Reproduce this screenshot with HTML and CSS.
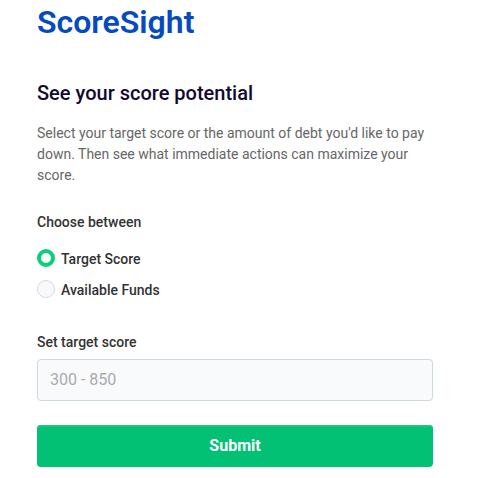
FILE: index.html
```html
<!DOCTYPE html>
<html lang="en">
<head>
<meta charset="utf-8">
<meta name="viewport" content="width=device-width, initial-scale=1">
<title>ScoreSight</title>
<link rel="stylesheet" href="styles.css">
</head>
<body>
<main class="page">
  <h1 class="brand">ScoreSight</h1>
  <h2 class="title">See your score potential</h2>
  <p class="intro">Select your target score or the amount of debt you'd like to pay down. Then see what immediate actions can maximize your score.</p>
  <form class="form">
    <fieldset class="choices">
      <legend class="label">Choose between</legend>
      <div class="options">
        <label class="option"><input class="radio" type="radio" name="mode" value="score" checked>Target Score</label>
        <label class="option"><input class="radio" type="radio" name="mode" value="funds">Available Funds</label>
      </div>
    </fieldset>
    <label class="label" for="target">Set target score</label>
    <input class="field" id="target" type="text" placeholder="300 - 850">
    <button class="submit" type="submit">Submit</button>
  </form>
</main>
</body>
</html>
```
FILE: styles.css
```css
* {
  box-sizing: border-box;
}

body {
  margin: 0;
  background: #fff;
  color: #333;
  font-family: Roboto, "Liberation Sans", sans-serif;
  font-size: 14px;
}

.page {
  padding: 0 49px 0 37px;
}

.brand {
  margin: 0;
  color: #044bc0;
  font-size: 32px;
  line-height: 44px;
  font-weight: 600;
}

.title {
  margin: 36px 0 0;
  color: #120a2e;
  font-size: 20px;
  line-height: 26px;
  font-weight: 500;
}

.intro {
  margin: 17px 0 0;
  color: #666;
  line-height: 21px;
}

.form {
  margin-top: 26px;
}

.choices {
  margin: 0 0 32px;
  padding: 0;
  border: 0;
}

.label {
  display: block;
  padding: 0;
  line-height: 20px;
  font-weight: 500;
}

.options {
  display: grid;
  gap: 11px;
  padding-top: 17px;
}

.option {
  display: flex;
  align-items: flex-start;
  gap: 6px;
  line-height: 20px;
  font-weight: 500;
}

.radio {
  flex: none;
  width: 18px;
  height: 18px;
  margin: 0;
  appearance: none;
  border: 1px solid #d5d8e0;
  border-radius: 50%;
  background: #f8f9fb;
}

.radio:checked {
  border: 4px solid #0dce7c;
  background: #fff;
}

.field {
  display: block;
  width: 100%;
  height: 42px;
  margin: 7px 0 0;
  padding: 0 12px 2px;
  border: 1px solid #cdd9e0;
  border-radius: 4px;
  background: #f8fafc;
  color: #333;
  font: inherit;
  font-size: 16px;
}

.field::placeholder {
  color: #a9abad;
}

.submit {
  display: block;
  width: 100%;
  height: 42px;
  margin: 24px 0 0;
  padding: 0 12px 2px;
  border: 0;
  border-radius: 4px;
  background: #02c074;
  box-shadow: inset 0 2px #18c67e;
  color: #fff;
  font: inherit;
  font-size: 16px;
  font-weight: 700;
}
```
